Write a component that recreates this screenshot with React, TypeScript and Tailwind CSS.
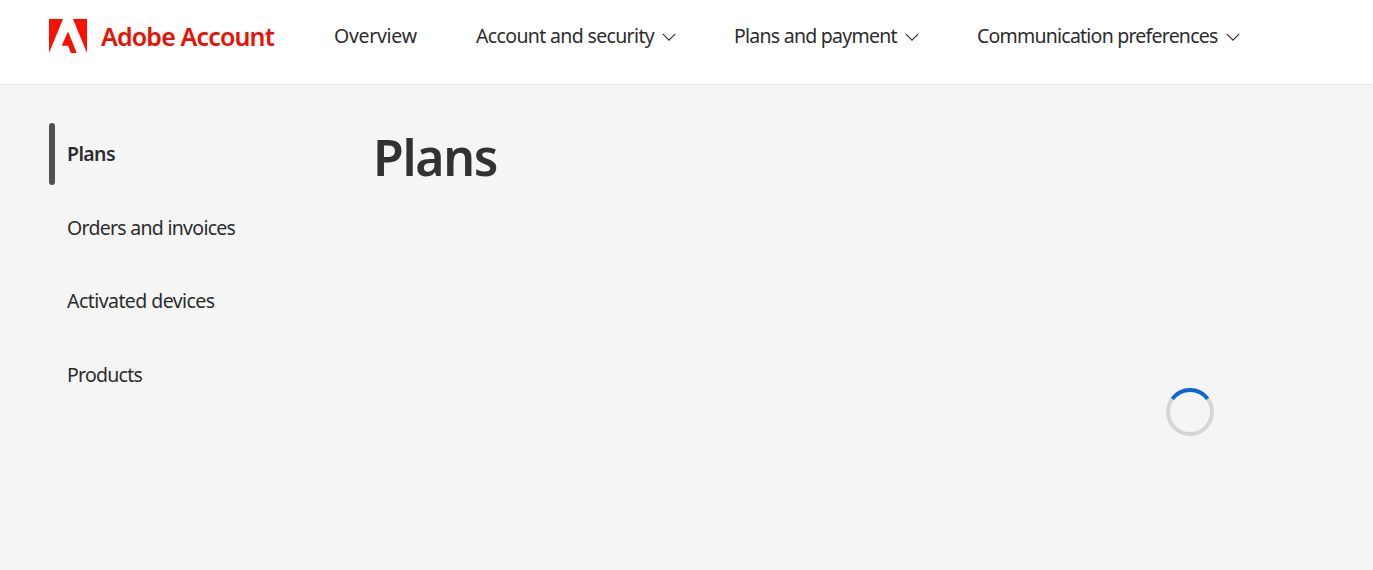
import clsx from 'clsx';

const navItems = [
  { label: 'Overview', hasMenu: false, className: 'w-[142px] tracking-[-0.3px]' },
  { label: 'Account and security', hasMenu: true, className: 'w-[258px] tracking-[-0.65px]' },
  { label: 'Plans and payment', hasMenu: true, className: 'w-[243px] tracking-[-0.75px]' },
  { label: 'Communication preferences', hasMenu: true, className: 'tracking-[-0.77px]' },
];

const sideItems = [
  { label: 'Plans', active: true, className: 'tracking-[-0.6px]' },
  { label: 'Orders and invoices', active: false, className: 'tracking-[-0.72px]' },
  { label: 'Activated devices', active: false, className: 'tracking-[-0.56px]' },
  { label: 'Products', active: false, className: 'tracking-[-0.75px]' },
];

function AdobeLogo() {
  return (
    <svg className="w-[38px] h-[34px] shrink-0" viewBox="0 0 38 34" fill="#fa0f00">
      <path d="M24 0H38V34ZM14 0H0V34ZM19 12.6 27.8 34H21.9L19.2 26.8H12.7Z" />
    </svg>
  );
}

function Caret() {
  return (
    <svg className="w-[14px] h-2 mt-[2px] shrink-0" viewBox="0 0 14 8" fill="none" stroke="#2c2c2c" strokeWidth="1.1">
      <path d="M0.8 0.9 7 7.1 13.2 0.9" />
    </svg>
  );
}

function Spinner() {
  return (
    <svg className="size-12" viewBox="0 0 48 48" fill="none" strokeWidth="4">
      <circle cx="24" cy="24" r="22" stroke="#d5d5d5" />
      <path d="M6.4 10.9A22 22 0 0 1 41.6 10.9" stroke="#0d66d0" />
    </svg>
  );
}

export default function App() {
  return (
    <div className="h-screen flex flex-col overflow-hidden bg-[#f5f5f5] font-['Noto_Sans',sans-serif] text-[#2c2c2c]">
      <header className="h-[85px] shrink-0 flex items-start bg-white border-b border-[#e8e8e8] pl-[49px]">
        <a className="flex items-center w-[285px] h-9 mt-[18px]">
          <AdobeLogo />
          <span className="ml-[14px] text-[25px] font-semibold leading-9 tracking-[-0.85px] whitespace-nowrap text-[#eb1000]">
            Adobe Account
          </span>
        </a>
        <nav className="flex items-center h-9 mt-[18px] text-[19.5px]">
          {navItems.map(item => (
            <a key={item.label} className={clsx('flex items-center gap-2 whitespace-nowrap', item.className)}>
              {item.label}
              {item.hasMenu && <Caret />}
            </a>
          ))}
        </nav>
      </header>

      <div className="flex flex-1">
        <aside className="w-[325px] shrink-0 pl-[49px] pt-[38px]">
          <ul className="flex flex-col gap-[11.5px]">
            {sideItems.map(item => (
              <li key={item.label} className="flex items-center h-[62px] gap-3">
                <span className={clsx('w-1.5 h-full rounded-full', item.active && 'bg-[#505050]')} />
                <span className={clsx('text-[19.5px] whitespace-nowrap', item.active && 'font-semibold', item.className)}>
                  {item.label}
                </span>
              </li>
            ))}
          </ul>
        </aside>

        <main className="flex-1 pl-12 pt-10">
          <h1 className="text-[50px] font-semibold leading-[64px] tracking-[-1.3px] text-[#323232]">Plans</h1>
          <div className="flex justify-end pr-[159px] pt-[198.5px]">
            <Spinner />
          </div>
        </main>
      </div>
    </div>
  );
}
